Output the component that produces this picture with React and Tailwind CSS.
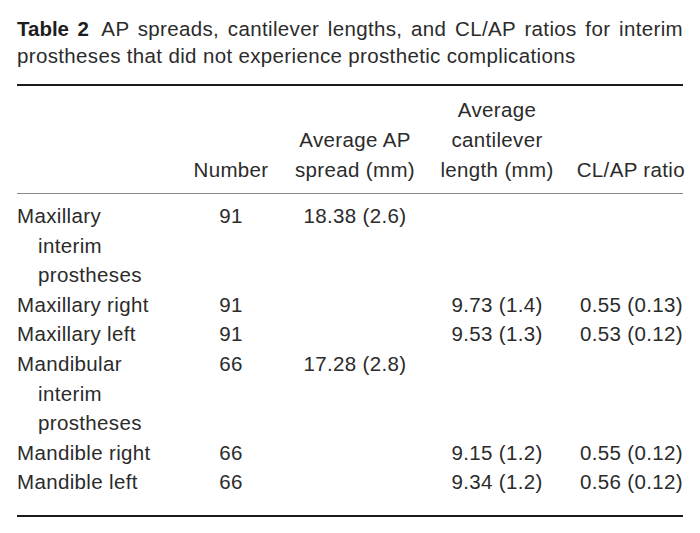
import React from "react";

const rows = [
  { label: ["Maxillary", "interim", "prostheses"], n: "91", ap: "18.38 (2.6)", cl: "", ratio: "" },
  { label: ["Maxillary right"], n: "91", ap: "", cl: "9.73 (1.4)", ratio: "0.55 (0.13)" },
  { label: ["Maxillary left"], n: "91", ap: "", cl: "9.53 (1.3)", ratio: "0.53 (0.12)" },
  { label: ["Mandibular", "interim", "prostheses"], n: "66", ap: "17.28 (2.8)", cl: "", ratio: "" },
  { label: ["Mandible right"], n: "66", ap: "", cl: "9.15 (1.2)", ratio: "0.55 (0.12)" },
  { label: ["Mandible left"], n: "66", ap: "", cl: "9.34 (1.2)", ratio: "0.56 (0.12)" },
];

export default function App() {
  return (
    <div className="w-[700px] h-[533px] bg-white px-[17px] pt-[15px] font-['Liberation_Sans',Arial,sans-serif] text-[#2b2b2b] text-[20.5px] tracking-[0.35px]">
      <div className="leading-[27px]">
        <div className="text-justify [text-align-last:justify]">
          <span className="font-bold text-[#1e1e1e] tracking-normal mr-[5px]">Table 2</span> AP spreads, cantilever lengths, and CL/AP ratios for interim
        </div>
        <div>prostheses that did not experience prosthetic complications</div>
      </div>

      <div className="mt-[15px] border-t-2 border-[#1c1c1c]">
        <div className="grid grid-cols-[171px_86px_162px_122px_127px] items-end leading-[30px] pt-[9px] pb-[8px] border-b border-[#8a8a8a]">
          <div></div>
          <div className="text-center">Number</div>
          <div className="text-center">
            <div>Average AP</div>
            <div>spread (mm)</div>
          </div>
          <div className="text-center">
            <div>Average</div>
            <div>cantilever</div>
            <div>length (mm)</div>
          </div>
          <div className="text-right whitespace-nowrap">CL/AP ratio</div>
        </div>

        <div className="pt-[7px] pb-[18px] border-b-2 border-[#1c1c1c] leading-[29.6px]">
          {rows.map((r, i) => (
            <div key={i} className="grid grid-cols-[171px_86px_162px_122px_127px] items-start">
              <div>
                {r.label.map((l, j) => (
                  <div key={j} className={j > 0 ? "pl-[21px]" : ""}>
                    {l}
                  </div>
                ))}
              </div>
              <div className="text-center">{r.n}</div>
              <div className="text-center">{r.ap}</div>
              <div className="text-center">{r.cl}</div>
              <div className="text-right pr-[2px] whitespace-nowrap">{r.ratio}</div>
            </div>
          ))}
        </div>
      </div>
    </div>
  );
}
